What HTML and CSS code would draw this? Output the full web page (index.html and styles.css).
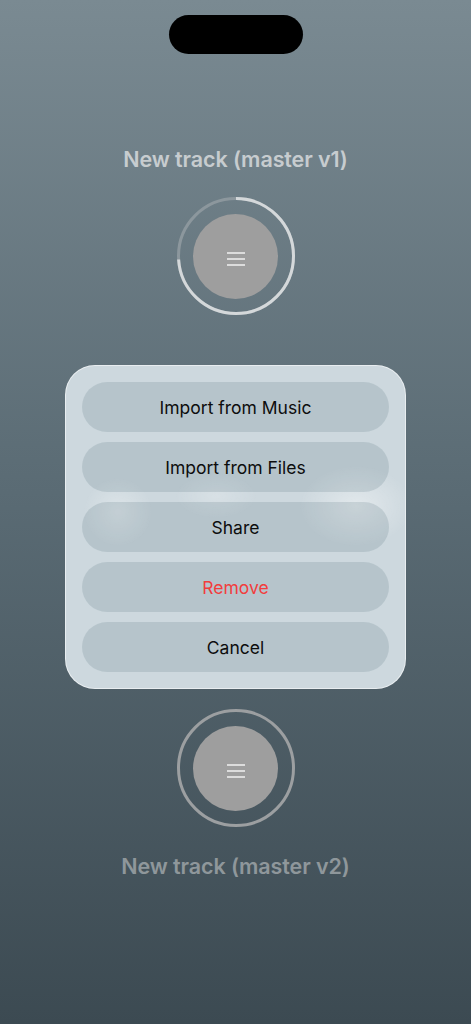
FILE: index.html
```html
<!DOCTYPE html>
<html lang="en">
<head>
<meta charset="utf-8">
<title>Tracks</title>
<link rel="stylesheet" href="styles.css">
</head>
<body>
<div class="screen">
  <div class="island"></div>

  <div class="track track-top">
    <div class="track-title">New track (master v1)</div>
    <div class="disc">
      <svg class="ring" width="118" height="118" viewBox="0 0 118 118">
        <circle class="ring-track" cx="59" cy="59" r="57.5" />
        <circle class="ring-progress" cx="59" cy="59" r="57.5" pathLength="100" stroke-dasharray="74 100" transform="rotate(-90 59 59)" />
      </svg>
      <div class="knob">
        <svg width="18" height="16" viewBox="0 0 18 16"><path d="M0 2h18M0 8h18M0 14h18" /></svg>
      </div>
    </div>
  </div>

  <div class="sheet">
    <button class="action">Import from Music</button>
    <button class="action">Import from Files</button>
    <button class="action">Share</button>
    <button class="action destructive">Remove</button>
    <button class="action">Cancel</button>
  </div>

  <div class="track track-bottom">
    <div class="disc">
      <svg class="ring" width="118" height="118" viewBox="0 0 118 118">
        <circle class="ring-full" cx="59" cy="59" r="57.5" />
      </svg>
      <div class="knob">
        <svg width="18" height="16" viewBox="0 0 18 16"><path d="M0 2h18M0 8h18M0 14h18" /></svg>
      </div>
    </div>
    <div class="track-title">New track (master v2)</div>
  </div>
</div>
</body>
</html>
```

FILE: styles.css
```css
* { box-sizing: border-box; }

html, body {
  margin: 0;
  padding: 0;
}

body {
  font-family: Inter, "Noto Sans", "Liberation Sans", sans-serif;
}

.screen {
  width: 471px;
  height: 1024px;
  display: flex;
  flex-direction: column;
  align-items: center;
  background: linear-gradient(180deg, #7a8a92 0%, #5a6b74 48%, #3c4a52 100%);
  overflow: hidden;
}

.island {
  width: 134px;
  height: 39px;
  margin-top: 15px;
  border-radius: 20px;
  background: #000;
}

.track {
  display: flex;
  flex-direction: column;
  align-items: center;
}

.track-top { margin-top: 93px; gap: 25px; }
.track-bottom { margin-top: 20px; gap: 27px; }

.track-title {
  font-size: 21.5px;
  line-height: 25px;
  font-weight: 600;
  letter-spacing: -0.1px;
  color: #c7cccf;
}

.track-bottom .track-title { color: #8f979b; }

.disc {
  position: relative;
  width: 118px;
  height: 118px;
  display: flex;
  align-items: center;
  justify-content: center;
}

.ring {
  position: absolute;
  inset: 0;
}

.ring circle { fill: none; stroke-width: 3; }
.ring-track { stroke: #8c979d; }
.ring-progress { stroke: #d4d8da; }
.ring-full { stroke: #9c9fa1; }

.knob {
  width: 85px;
  height: 85px;
  border-radius: 50%;
  background: #9e9e9e;
  display: flex;
  align-items: center;
  justify-content: center;
  padding-top: 5px;
}

.knob svg path {
  stroke: #dcdcdc;
  stroke-width: 2.2;
  fill: none;
}

.sheet {
  margin-top: 50px;
  width: 341px;
  padding: 16px;
  display: flex;
  flex-direction: column;
  gap: 10px;
  border-radius: 30px;
  border: 1px solid rgba(255, 255, 255, 0.55);
  background:
    radial-gradient(ellipse 34px 34px at 52px 146px, rgba(255,255,255,0.32), rgba(255,255,255,0) 100%),
    radial-gradient(ellipse 40px 22px at 150px 130px, rgba(255,255,255,0.22), rgba(255,255,255,0) 100%),
    radial-gradient(ellipse 56px 40px at 290px 140px, rgba(255,255,255,0.42), rgba(255,255,255,0) 100%),
    #cdd8de;
}

.action {
  height: 50px;
  border: none;
  border-radius: 25px;
  background: rgba(70, 100, 115, 0.17);
  font-family: Inter, "Noto Sans", "Liberation Sans", sans-serif;
  font-size: 17.5px;
  font-weight: 400;
  color: #0d0d0d;
  padding: 0;
}

.action.destructive { color: #f23d3d; }
```
